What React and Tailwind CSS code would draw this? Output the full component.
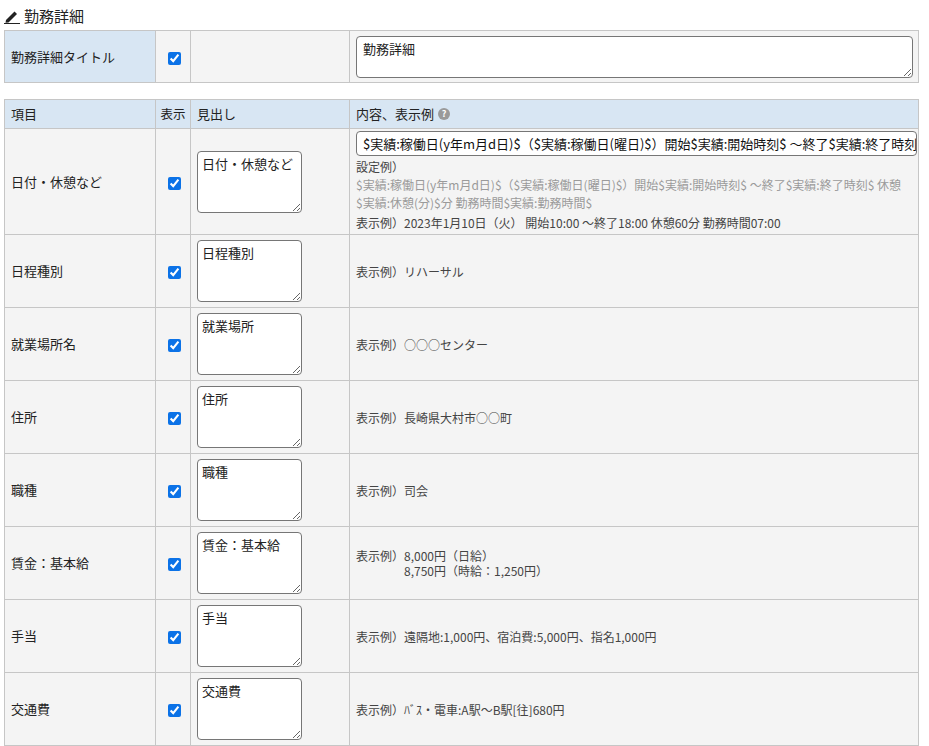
import React from 'react';

const rows = [
  { label: '日付・休憩など', head: '日付・休憩など', first: true },
  { label: '日程種別', head: '日程種別', ex: ['表示例）リハーサル'] },
  { label: '就業場所名', head: '就業場所', ex: ['表示例）○○○センター'] },
  { label: '住所', head: '住所', ex: ['表示例）長崎県大村市○○町'] },
  { label: '職種', head: '職種', ex: ['表示例）司会'] },
  { label: '賃金：基本給', head: '賃金：基本給', ex: ['表示例）8,000円（日給）', '8,750円（時給：1,250円）'] },
  { label: '手当', head: '手当', ex: ['表示例）遠隔地:1,000円、宿泊費:5,000円、指名1,000円'] },
  { label: '交通費', head: '交通費', ex: ['表示例）ﾊﾞｽ・電車:A駅～B駅[往]680円'] },
];

const Check = () => (
  <input type="checkbox" defaultChecked className="w-[13px] h-[13px] accent-[#0b72e7] ml-1.5 align-middle" />
);

const td = 'border border-[#c6c6c6] px-1.5 align-middle';

export default function App() {
  return (
    <div className="bg-white text-[13px] text-[#222] px-1 pt-1.5" style={{ fontFamily: '"Noto Sans CJK JP", "Noto Sans", sans-serif' }}>
      <div className="flex items-center gap-1 text-[15px] mb-1 h-[20px]">
        <svg width="16" height="16" viewBox="0 0 16 16">
          <path d="M2 12 L10.5 3.5 L13 6 L4.5 14.5 L1.5 14.8 Z" fill="#222" />
          <rect x="0" y="15" width="16" height="1.2" fill="#222" />
        </svg>
        <span>勤務詳細</span>
      </div>
      <table className="w-[915px] border-collapse table-fixed mb-4">
        <colgroup>
          <col className="w-[151px]" /><col className="w-[35px]" /><col className="w-[159px]" /><col />
        </colgroup>
        <tbody>
          <tr className="h-[52px]">
            <td className={`${td} bg-[#d8e6f3]`}>勤務詳細タイトル</td>
            <td className={`${td} bg-[#f4f4f4] px-0`}><Check /></td>
            <td className={`${td} bg-[#f4f4f4]`}></td>
            <td className={`${td} bg-[#f4f4f4] py-1`}>
              <textarea defaultValue="勤務詳細" className="block w-[557px] h-[42px] border border-[#767676] rounded-sm bg-white px-1.5 py-0.5 text-[13px] resize-y" />
            </td>
          </tr>
        </tbody>
      </table>
      <table className="w-[915px] border-collapse table-fixed">
        <colgroup>
          <col className="w-[151px]" /><col className="w-[35px]" /><col className="w-[159px]" /><col />
        </colgroup>
        <thead>
          <tr className="h-[29px] bg-[#d8e6f3]">
            <th className={`${td} text-left font-normal`}>項目</th>
            <th className="border border-[#c6c6c6] px-0 text-center font-normal whitespace-nowrap text-[12.5px]">表示</th>
            <th className={`${td} text-left font-normal px-1`}>見出し</th>
            <th className={`${td} text-left font-normal px-1`}>
              <span className="inline-flex items-center gap-1">内容、表示例
                <span className="inline-flex w-[12px] h-[12px] rounded-full bg-[#9a9a9a] text-white text-[9px] font-bold items-center justify-center">?</span>
              </span>
            </th>
          </tr>
        </thead>
        <tbody>
          {rows.map((r) => (
            <tr key={r.label} className={r.first ? 'h-[105px] bg-[#f4f4f4]' : 'h-[73px] bg-[#f4f4f4]'}>
              <td className={td}>{r.label}</td>
              <td className={`${td} px-0`}><Check /></td>
              <td className={`${td} px-1`}>
                <textarea defaultValue={r.head} className="block w-[105px] h-[62px] border border-[#767676] rounded-sm bg-white px-1 py-0.5 text-[13px] resize-y" />
              </td>
              <td className={`${td} px-1 text-[12px] text-[#444]`}>
                {r.first ? (
                  <div className="py-0.5">
                    <div className="h-[25px] border border-[#767676] rounded-sm bg-white px-1.5 text-[13px] text-[#111] leading-[23px] whitespace-nowrap overflow-hidden w-[561px]">
                      $実績:稼働日(y年m月d日)$（$実績:稼働日(曜日)$）開始$実績:開始時刻$ ～終了$実績:終了時刻$ 休憩$実績:休憩(分)$分
                    </div>
                    <div className="mt-0.5 leading-[18px]">設定例）</div>
                    <div className="text-[#9a9a9a] leading-[18px]">$実績:稼働日(y年m月d日)$（$実績:稼働日(曜日)$）開始$実績:開始時刻$ ～終了$実績:終了時刻$ 休憩$実績:休憩(分)$分 勤務時間$実績:勤務時間$</div>
                    <div className="mt-0.5 leading-[18px]">表示例）2023年1月10日（火） 開始10:00 ～終了18:00 休憩60分 勤務時間07:00</div>
                  </div>
                ) : (
                  <div className="leading-[15px]">
                    <div>{r.ex[0]}</div>
                    {r.ex[1] && <div className="pl-[48px]">{r.ex[1]}</div>}
                  </div>
                )}
              </td>
            </tr>
          ))}
        </tbody>
      </table>
    </div>
  );
}
